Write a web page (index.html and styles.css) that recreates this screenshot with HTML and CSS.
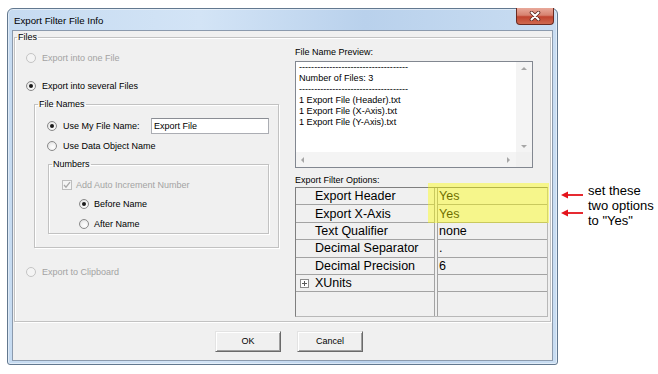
FILE: index.html
```html
<!DOCTYPE html>
<html>
<head>
<meta charset="utf-8">
<link rel="stylesheet" href="styles.css">
</head>
<body>
<div class="window">
  <div class="titlebar">
    <span class="title">Export Filter File Info</span>
    <div class="close">
      <svg width="12" height="10" viewBox="0 0 12 10">
        <path d="M2.5 1.5 L9.5 8.5 M9.5 1.5 L2.5 8.5" stroke="#5b2a22" stroke-width="3.6" stroke-linecap="round"/>
        <path d="M2.5 1.5 L9.5 8.5 M9.5 1.5 L2.5 8.5" stroke="#ffffff" stroke-width="2" stroke-linecap="round"/>
      </svg>
    </div>
  </div>
  <div class="client">
    <fieldset class="group files">
      <legend>Files</legend>
      <div class="cols">
        <div class="leftcol">
          <div class="row top disabled r1"><span class="radio"></span>Export into one File</div>
          <div class="row top r2"><span class="radio on"></span>Export into several Files</div>
          <fieldset class="group names">
            <legend>File Names</legend>
            <div class="row nm1"><span class="radio on"></span><span class="lbl">Use My File Name:</span><span class="input">Export File</span></div>
            <div class="row nm2"><span class="radio"></span>Use Data Object Name</div>
            <fieldset class="group numbers">
              <legend>Numbers</legend>
              <div class="row cb disabled"><span class="check">
                <svg width="8" height="8" viewBox="0 0 8 8"><path d="M1 4 L3 6.2 L7 1.2" stroke="#a8a8a8" stroke-width="1.3" fill="none"/></svg>
              </span>Add Auto Increment Number</div>
              <div class="row sub s1"><span class="radio on"></span>Before Name</div>
              <div class="row sub s2"><span class="radio"></span>After Name</div>
            </fieldset>
          </fieldset>
          <div class="row top disabled clip"><span class="radio"></span>Export to Clipboard</div>
        </div>
        <div class="rightcol">
          <div class="caption">File Name Preview:</div>
          <div class="preview">
            <div class="ptext">
              <div>------------------------------------</div>
              <div>Number of Files: 3</div>
              <div>------------------------------------</div>
              <div>1 Export File (Header).txt</div>
              <div>1 Export File (X-Axis).txt</div>
              <div>1 Export File (Y-Axis).txt</div>
            </div>
            <div class="vscroll"><span class="tri up"></span><span class="tri down"></span></div>
            <div class="hscroll"><span class="tri left"></span><span class="tri right"></span></div>
            <div class="corner"></div>
          </div>
          <div class="caption opts">Export Filter Options:</div>
          <div class="pgrid">
            <div class="pname">Export Header</div><div class="pval">Yes</div>
            <div class="pname">Export X-Axis</div><div class="pval">Yes</div>
            <div class="pname">Text Qualifier</div><div class="pval">none</div>
            <div class="pname">Decimal Separator</div><div class="pval">.</div>
            <div class="pname">Decimal Precision</div><div class="pval">6</div>
            <div class="pname expand"><span class="plus"></span>XUnits</div><div class="pval"></div>
            <div class="pname last"></div><div class="pval last"></div>
          </div>
          <div class="highlight"></div>
        </div>
      </div>
    </fieldset>
    <div class="footer">
      <div class="btn">OK</div>
      <div class="btn">Cancel</div>
    </div>
  </div>
</div>
<div class="note">
  <div class="arrows">
    <svg class="arrow" width="22" height="8" viewBox="0 0 22 8"><path d="M0 4 L7 0.5 L7 7.5 Z" fill="#e4131b"/><rect x="6" y="3.1" width="16" height="1.8" fill="#e4131b"/></svg>
    <svg class="arrow a2" width="22" height="8" viewBox="0 0 22 8"><path d="M0 4 L7 0.5 L7 7.5 Z" fill="#e4131b"/><rect x="6" y="3.1" width="16" height="1.8" fill="#e4131b"/></svg>
  </div>
  <div class="notetext">set these<br>two options<br>to "Yes"</div>
</div>
</body>
</html>
```

FILE: styles.css
```css
html, body {
  margin: 0;
  padding: 0;
  background: #ffffff;
}
body {
  display: flex;
  align-items: flex-start;
  font-family: "Liberation Sans", Arial, sans-serif;
  width: 658px;
  height: 374px;
  overflow: hidden;
}
.window {
  margin: 8px 0 0 7px;
  width: 551px;
  height: 357px;
  box-sizing: border-box;
  border: 1px solid #62788f;
  border-radius: 6px 6px 3px 3px;
  background: linear-gradient(to right, #c6dbf1 0%, #d3e4f6 35%, #b9d1ec 65%, #c9ddf2 100%);
  display: flex;
  flex-direction: column;
  box-shadow: inset 0 0 0 1px rgba(255,255,255,0.45);
}
.titlebar {
  height: 21px;
  display: flex;
  align-items: flex-start;
  padding-left: 6px;
}
.title {
  font-size: 9.7px;
  line-height: 12px;
  margin-top: 6px;
  color: #000;
}
.close {
  margin-left: auto;
  margin-right: 3px;
  margin-top: -1px;
  width: 38px;
  height: 17px;
  box-sizing: border-box;
  border: 1px solid #6a2b22;
  border-top: none;
  border-radius: 0 0 4px 4px;
  background: linear-gradient(to bottom, #e9a99b 0%, #d7826f 45%, #c0432f 55%, #cf6a50 100%);
  display: flex;
  align-items: center;
  justify-content: center;
}
.client {
  margin: 0 4px;
  height: 331px;
  box-sizing: border-box;
  border: 1px solid #8b9aad;
  background: #f0f0f0;
  display: flex;
  flex-direction: column;
}
.group {
  margin: 0;
  padding: 0;
  border: 1px solid #c2c2c2;
  box-shadow: 1px 1px 0 #ffffff, inset 1px 1px 0 #ffffff;
  min-width: 0;
}
.group > legend {
  font-size: 9px;
  line-height: 12px;
  padding: 0 1px;
  margin-left: 2px;
  color: #000;
}
.files {
  flex: 1;
  margin: 0 1px;
}
.cols {
  display: flex;
  align-items: flex-start;
}
.leftcol {
  width: 280px;
  display: flex;
  flex-direction: column;
  align-items: flex-start;
}
.row {
  display: flex;
  align-items: center;
  height: 14px;
  font-size: 9px;
  color: #000;
  white-space: nowrap;
}
.row.disabled {
  color: #a3a3a3;
}
.row.top {
  padding-left: 11px;
}
.row.r1 { margin-top: 8px; }
.row.r2 { margin-top: 14px; }
.row.clip { margin-top: 17px; padding-left: 11px; }
.radio {
  width: 10px;
  height: 10px;
  box-sizing: border-box;
  border-radius: 50%;
  border: 1px solid #8a8a8a;
  background: radial-gradient(circle at 60% 65%, #ffffff 0%, #f2f2f2 45%, #d6d6d6 100%);
  margin-right: 6px;
  display: flex;
  align-items: center;
  justify-content: center;
  flex: none;
}
.radio.on::after {
  content: "";
  width: 4px;
  height: 4px;
  border-radius: 50%;
  background: #1a1a1a;
}
.disabled .radio {
  border-color: #c4c4c4;
  background: #f4f4f4;
}
.names {
  margin-top: 5px;
  margin-left: 19px;
  width: 245px;
  box-sizing: border-box;
  padding-bottom: 13px;
  display: flex;
  flex-direction: column;
  align-items: flex-start;
}
.names > legend { margin-left: 3px; }
.row.nm1 {
  margin-top: 7px;
  height: 17px;
  padding-left: 12px;
}
.row.nm2 {
  margin-top: 5px;
  padding-left: 12px;
}
.lbl {
  width: 88px;
}
.input {
  width: 118px;
  height: 16px;
  box-sizing: border-box;
  border: 1px solid #abadb3;
  border-top-color: #8a8d94;
  background: #ffffff;
  padding-left: 2px;
  line-height: 14px;
  font-size: 9px;
}
.numbers {
  margin-top: 5px;
  margin-left: 13px;
  width: 221px;
  box-sizing: border-box;
  padding-bottom: 2px;
}
.numbers > legend { margin-left: 3px; }
.row.cb {
  margin-top: 8px;
  padding-left: 13px;
}
.check {
  width: 10px;
  height: 10px;
  box-sizing: border-box;
  border: 1px solid #bdbdbd;
  background: #f4f4f4;
  margin-right: 4px;
  display: flex;
  align-items: center;
  justify-content: center;
}
.row.sub {
  padding-left: 30px;
}
.row.sub .radio { margin-right: 5px; }
.row.s1 { margin-top: 5px; }
.row.s2 { margin-top: 6px; }

.rightcol {
  position: relative;
  width: 254px;
  display: flex;
  flex-direction: column;
}
.caption {
  font-size: 9px;
  line-height: 12px;
  margin-top: 3px;
  color: #000;
}
.caption.opts { margin-top: 6px; }
.preview {
  margin-top: 3px;
  width: 238px;
  height: 107px;
  box-sizing: border-box;
  border: 1px solid #828790;
  background: #ffffff;
  display: grid;
  grid-template-columns: 1fr 16px;
  grid-template-rows: 1fr 15px;
}
.ptext {
  font-size: 9.1px;
  line-height: 11px;
  padding-left: 3px;
  color: #000;
  white-space: nowrap;
  overflow: hidden;
}
.vscroll {
  background: #f4f4f4;
  display: flex;
  flex-direction: column;
  justify-content: space-between;
  align-items: center;
  padding: 5px 0 4px;
}
.hscroll {
  background: #f4f4f4;
  display: flex;
  justify-content: space-between;
  align-items: center;
  padding: 0 6px 0 5px;
}
.corner {
  background: #f0f0f0;
}
.tri {
  width: 0;
  height: 0;
  border: 3px solid transparent;
}
.tri.up { border-bottom-color: #a6a6a6; border-top-width: 0; }
.tri.down { border-top-color: #a6a6a6; border-bottom-width: 0; }
.tri.left { border-right-color: #a6a6a6; border-left-width: 0; }
.tri.right { border-left-color: #a6a6a6; border-right-width: 0; }

.pgrid {
  margin-top: 1px;
  width: 253px;
  height: 130px;
  box-sizing: border-box;
  border: 1px solid #7f7f7f;
  border-right-color: #b8b8b8;
  border-bottom-color: #b8b8b8;
  background: #f0f0f0;
  display: grid;
  grid-template-columns: 139px 1fr;
  grid-template-rows: repeat(6, 17.4px) 1fr;
}
.pname, .pval {
  box-sizing: border-box;
  border-bottom: 1px solid #a3a3a3;
  font-size: 12.5px;
  line-height: 16px;
  color: #000;
  white-space: nowrap;
  display: flex;
  align-items: center;
}
.pname {
  padding-left: 19px;
  border-right: 1px solid #a3a3a3;
}
.pval {
  margin-left: 2px;
  border-left: 1px solid #a3a3a3;
  padding-left: 1px;
}
.pname.last, .pval.last {
  border-bottom: none;
}
.pname.expand {
  padding-left: 4px;
}
.plus {
  width: 9px;
  height: 9px;
  box-sizing: border-box;
  border: 1px solid #8c8c8c;
  background: linear-gradient(#5a5a5a, #5a5a5a) center / 5px 1px no-repeat,
              linear-gradient(#5a5a5a, #5a5a5a) center / 1px 5px no-repeat,
              #ffffff;
  margin-right: 6px;
}
.highlight {
  position: absolute;
  left: 133px;
  top: 140px;
  width: 121px;
  height: 40px;
  background: rgba(255, 255, 0, 0.42);
}
.footer {
  height: 38px;
  box-sizing: border-box;
  padding: 9px 0 0 202px;
  display: flex;
  gap: 16px;
  align-items: flex-start;
}
.btn {
  width: 66px;
  height: 21px;
  box-sizing: border-box;
  border: 1px solid;
  border-color: #e3e3e3 #6a6a6a #6a6a6a #e3e3e3;
  box-shadow: inset 1px 1px 0 #ffffff, inset -1px -1px 0 #a0a0a0;
  background: #f0f0f0;
  font-size: 9px;
  line-height: 19px;
  text-align: center;
  color: #000;
}
.note {
  margin: 183px 0 0 3px;
  display: flex;
  align-items: flex-start;
}
.arrows {
  display: flex;
  flex-direction: column;
  margin-top: 8px;
  width: 22px;
}
.arrow { display: block; }
.arrow.a2 { margin-top: 10px; }
.notetext {
  margin-left: 5px;
  font-size: 13px;
  line-height: 15px;
  color: #000;
  white-space: nowrap;
}
```
